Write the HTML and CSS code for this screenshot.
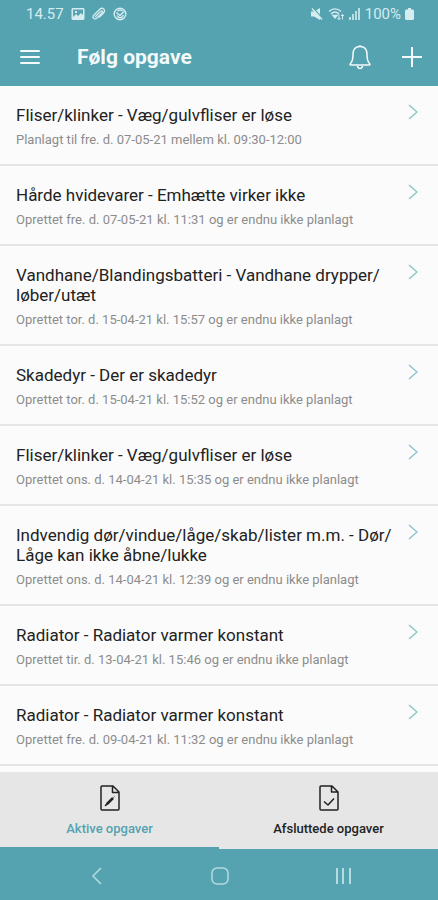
FILE: index.html
```html
<!DOCTYPE html>
<html lang="da">
<head>
    <meta charset="UTF-8">
    <meta name="viewport" content="width=device-width, initial-scale=1.0">
    <title>Følg opgave</title>
    <link rel="stylesheet" href="styles.css">
</head>
<body>

    <header class="top">
        <!-- Status bar -->
        <div class="status-bar">
            <div class="status-left">
                <span>14.57</span>
                <svg width="14" height="14" viewBox="0 0 14 14"><path fill="currentColor" fill-rule="evenodd" d="M1.5 1h11l1 1v10l-1 1h-11l-1-1V2zM2 2.500V10l3-3 2 2 3-3 2 2V2.500zM4 4h2v2H4z"/></svg>
                <svg width="14" height="14" viewBox="0 0 14 14" fill="none" stroke="currentColor" stroke-width="1.300" stroke-linecap="round"><path d="M3.500 9.500 8.500 4.500c1.500-1.500 3 0 1.500 1.500l-5 5c-2.500 2.500-5.500-.5-3-3l5.500-5.500c3-3 7 .5 4 3.500L7.500 10"/></svg>
                <svg width="14" height="14" viewBox="0 0 14 14" fill="none" stroke="currentColor" stroke-width="1.400"><circle cx="7" cy="7" r="5.800"/><path d="M3.500 5.500 7 8.500l4-4M4 8.500c1.500 3 5 3 6.500-.5M4.500 4c1.500-1.200 3.500-1.200 5 0"/></svg>
            </div>
            <div class="status-right">
                <svg width="14" height="14" viewBox="0 0 14 14"><path fill="currentColor" d="M1 4.500h3L10 1v12L4 9.500H1z"/><path d="M3 1l10 11" stroke="#55a2b0" stroke-width="1.500"/><path d="M2 1.500l10 11" stroke="currentColor" stroke-width="1.500"/></svg>
                <svg class="wifi" width="17" height="14" viewBox="0 0 17 14" fill="none" stroke="currentColor" stroke-width="1.400"><path d="M1 4.500c3.500-3.500 8.500-3.500 12 0M3 7c2.500-2.500 5.500-2.500 8 0"/><path d="M5 8.500h4L7 11z" fill="currentColor"/><path d="M11 7.500v5M9.500 11l1.500 1.800 1.500-1.800M14.500 12.500v-5M13 9l1.500-1.700L16 9" stroke-width="1"/></svg>
                <svg width="12" height="14" viewBox="0 0 12 14" fill="currentColor" opacity=".8"><path d="M0 10h2v3H0zM3 7h2v6H3z"/><path d="M6 4h2v9H6zM9 1h2v12H9z"/></svg>
                <span class="battery-text">100%</span>
                <svg width="9" height="14" viewBox="0 0 9 14"><path fill="currentColor" d="M3 1h3v1.500h2l1 1V12l-1 1H1l-1-1V3.500l1-1h2z"/></svg>
            </div>
        </div>

        <!-- App bar -->
        <div class="app-bar">
            <button class="icon-button" type="button" aria-label="Menu">
                <svg width="20" height="16" viewBox="0 0 20 16" stroke="currentColor" stroke-width="2" stroke-linecap="round"><path d="M1 2h18M1 8h18M1 14h18"/></svg>
            </button>
            <h1>Følg opgave</h1>
            <button class="icon-button" type="button" aria-label="Notifikationer">
                <svg width="24" height="26" viewBox="0 0 24 26" fill="none" stroke="currentColor" stroke-width="1.500" stroke-linejoin="round"><path d="M12 2.500c-5 0-7 3.500-7 8 0 5.500-1 7.500-2.500 9-.8.800-.6 1.500.4 1.500h18.200c1 0 1.200-.7.4-1.500C20 18 19 16 19 10.500c0-4.500-2-8-7-8zM12 2.500V1M9.500 22c.2 3.200 4.800 3.200 5 0"/></svg>
            </button>
            <button class="icon-button add" type="button" aria-label="Ny opgave">
                <svg width="20" height="20" viewBox="0 0 20 20" stroke="currentColor" stroke-width="2"><path d="M10 0v20M0 10h20"/></svg>
            </button>
        </div>
    </header>

    <main class="task-list">
        <a class="task" href="#">
            <div class="task-text">
                <h2>Fliser/klinker - Væg/gulvfliser er løse</h2>
                <p>Planlagt til fre. d. 07-05-21 mellem kl. 09:30-12:00</p>
            </div>
            <svg class="chevron" viewBox="0 0 10 16"><path d="M1 1l8 7-8 7"/></svg>
        </a>
        <a class="task" href="#">
            <div class="task-text">
                <h2>Hårde hvidevarer - Emhætte virker ikke</h2>
                <p>Oprettet fre. d. 07-05-21 kl. 11:31 og er endnu ikke planlagt</p>
            </div>
            <svg class="chevron" viewBox="0 0 10 16"><path d="M1 1l8 7-8 7"/></svg>
        </a>
        <a class="task" href="#">
            <div class="task-text">
                <h2>Vandhane/Blandingsbatteri - Vandhane drypper/<wbr>løber/utæt</h2>
                <p>Oprettet tor. d. 15-04-21 kl. 15:57 og er endnu ikke planlagt</p>
            </div>
            <svg class="chevron" viewBox="0 0 10 16"><path d="M1 1l8 7-8 7"/></svg>
        </a>
        <a class="task" href="#">
            <div class="task-text">
                <h2>Skadedyr - Der er skadedyr</h2>
                <p>Oprettet tor. d. 15-04-21 kl. 15:52 og er endnu ikke planlagt</p>
            </div>
            <svg class="chevron" viewBox="0 0 10 16"><path d="M1 1l8 7-8 7"/></svg>
        </a>
        <a class="task" href="#">
            <div class="task-text">
                <h2>Fliser/klinker - Væg/gulvfliser er løse</h2>
                <p>Oprettet ons. d. 14-04-21 kl. 15:35 og er endnu ikke planlagt</p>
            </div>
            <svg class="chevron" viewBox="0 0 10 16"><path d="M1 1l8 7-8 7"/></svg>
        </a>
        <a class="task" href="#">
            <div class="task-text">
                <h2>Indvendig dør/vindue/låge/skab/lister m.m. - Dør/<wbr>Låge kan ikke åbne/lukke</h2>
                <p>Oprettet ons. d. 14-04-21 kl. 12:39 og er endnu ikke planlagt</p>
            </div>
            <svg class="chevron" viewBox="0 0 10 16"><path d="M1 1l8 7-8 7"/></svg>
        </a>
        <a class="task" href="#">
            <div class="task-text">
                <h2>Radiator - Radiator varmer konstant</h2>
                <p>Oprettet tir. d. 13-04-21 kl. 15:46 og er endnu ikke planlagt</p>
            </div>
            <svg class="chevron" viewBox="0 0 10 16"><path d="M1 1l8 7-8 7"/></svg>
        </a>
        <a class="task" href="#">
            <div class="task-text">
                <h2>Radiator - Radiator varmer konstant</h2>
                <p>Oprettet fre. d. 09-04-21 kl. 11:32 og er endnu ikke planlagt</p>
            </div>
            <svg class="chevron" viewBox="0 0 10 16"><path d="M1 1l8 7-8 7"/></svg>
        </a>
    </main>

    <!-- Tabs -->
    <nav class="tabs">
        <a class="tab active" href="#">
            <svg width="20" height="26" viewBox="0 0 20 26" fill="none" stroke="#222" stroke-width="1.500" stroke-linejoin="round"><path d="M2 1h11l6 6v17q0 1-1 1H2q-1 0-1-1V2q0-1 1-1zM12.500 1v6.500H19"/><path d="M7 19l6-6" stroke-width="2.500"/><path d="M5 21l1.500-2.500 1 1zM13.500 12.500l1-1" fill="#222" stroke-width="1"/></svg>
            <span>Aktive opgaver</span>
        </a>
        <a class="tab" href="#">
            <svg width="20" height="26" viewBox="0 0 20 26" fill="none" stroke="#222" stroke-width="1.500" stroke-linejoin="round"><path d="M2 1h11l6 6v17q0 1-1 1H2q-1 0-1-1V2q0-1 1-1zM12.500 1v6H19"/><path d="M5 16.500l4 3.500 6-6.500"/></svg>
            <span>Afsluttede opgaver</span>
        </a>
    </nav>

    <!-- Phone navigation -->
    <div class="phone-nav">
        <button class="icon-button" type="button" aria-label="Tilbage">
            <svg width="18" height="18" viewBox="0 0 18 18" fill="none" stroke="currentColor" stroke-width="1.500"><path d="M13 1L5 9l8 8"/></svg>
        </button>
        <button class="icon-button" type="button" aria-label="Hjem">
            <svg width="18" height="18" viewBox="0 0 18 18" fill="none" stroke="currentColor" stroke-width="1.500"><rect x="1" y="1" width="16" height="16" rx="5"/></svg>
        </button>
        <button class="icon-button" type="button" aria-label="Seneste">
            <svg width="18" height="18" viewBox="0 0 18 18" stroke="currentColor" stroke-width="2"><path d="M3 1v16M9 1v16M16 1v16"/></svg>
        </button>
    </div>

</body>
</html>
```
FILE: styles.css
```css
* {
    box-sizing: border-box;
}

body {
    font-family: Roboto, "Liberation Sans", sans-serif;
    background-color: #fbfbfb;
    margin: 0;
    min-height: 100vh;
    display: flex;
    flex-direction: column;
}

h1, h2, p {
    margin: 0;
}

svg {
    display: block;
    flex-shrink: 0;
}

.top {
    background-color: #55a2b0;
    color: #f3fafb;
}

.status-bar {
    display: flex;
    justify-content: space-between;
    align-items: center;
    height: 28px;
    padding: 0 24px 0 26px;
    font-size: 15px;
    color: #d5edf0;
}

.status-left {
    display: flex;
    align-items: center;
    gap: 7px;
}

.status-right {
    display: flex;
    align-items: center;
    gap: 4px;
}

.app-bar {
    display: flex;
    align-items: center;
    height: 58px;
    padding: 0 16px 0 20px;
}

.app-bar h1 {
    flex: 1;
    margin-left: 37px;
    font-size: 21px;
    font-weight: 700;
    line-height: 28px;
}

.icon-button {
    display: flex;
    align-items: center;
    justify-content: center;
    padding: 0;
    border: none;
    background: none;
    color: inherit;
    cursor: pointer;
}

.add {
    margin-left: 30px;
}

.task-list {
    flex: 1;
}

.task {
    display: flex;
    justify-content: space-between;
    padding: 19px 20px 16px 16px;
    border-bottom: 2px solid #e5e5e5;
    color: #222;
    text-decoration: none;
}

.task h2 {
    font-size: 17px;
    font-weight: 400;
    line-height: 20px;
}

.task p {
    margin-top: 7px;
    font-size: 13px;
    line-height: 16px;
    color: #8c8c8c;
}

.chevron {
    width: 10px;
    height: 16px;
    margin-top: -1px;
    fill: none;
    stroke: #8cc4cd;
    stroke-width: 1.5;
}

.tabs {
    display: flex;
    background-color: #e6e6e6;
}

.tab {
    flex: 1;
    display: flex;
    flex-direction: column;
    align-items: center;
    gap: 10px;
    padding: 13px 0 10px;
    border-bottom: 2px solid transparent;
    font-size: 13px;
    font-weight: 500;
    line-height: 16px;
    color: #222;
    text-decoration: none;
}

.tab.active {
    color: #55a2b0;
    border-bottom-color: #55a2b0;
}

.phone-nav {
    display: flex;
    justify-content: space-between;
    align-items: center;
    height: 51px;
    padding: 2px 86px 0 88px;
    background-color: #55a2b0;
    color: #b4dce2;
}
```
